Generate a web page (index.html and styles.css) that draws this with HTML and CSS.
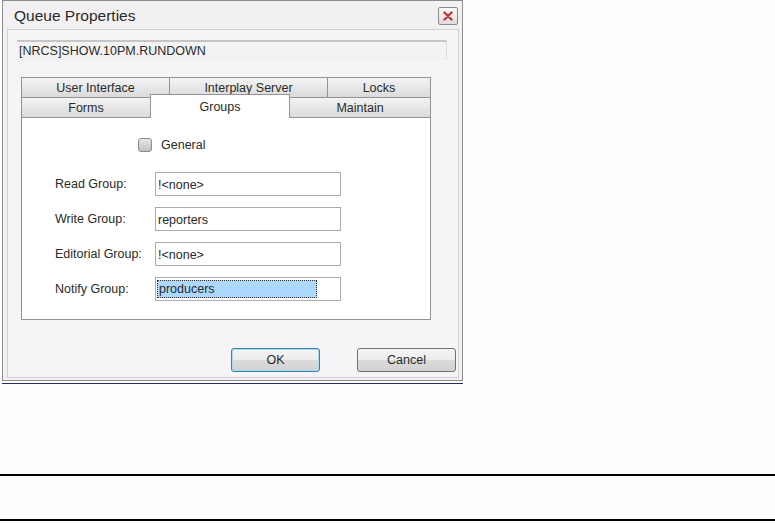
FILE: index.html
```html
<!DOCTYPE html>
<html lang="en">
<head>
    <meta charset="UTF-8">
    <title>Queue Properties</title>
    <link rel="stylesheet" href="styles.css">
</head>
<body>

    <!-- Dialog window -->
    <div class="dialog">
        <div class="titlebar">
            <span class="title">Queue Properties</span>
            <div class="close-btn">
                <svg width="10" height="10" viewBox="0 0 10 10">
                    <path d="M1.5 1.5 L8.5 8.5 M8.5 1.5 L1.5 8.5" stroke="#c4343c" stroke-width="2.4" stroke-linecap="round"/>
                </svg>
            </div>
        </div>

        <div class="client">
            <div class="path-field">[NRCS]SHOW.10PM.RUNDOWN</div>

            <!-- Tab rows -->
            <div class="tabs">
                <div class="tab-row">
                    <div class="tab w1">User Interface</div>
                    <div class="tab w2">Interplay Server</div>
                    <div class="tab w3">Locks</div>
                </div>
                <div class="tab-row">
                    <div class="tab w4">Forms</div>
                    <div class="tab w5 active">Groups</div>
                    <div class="tab w6">Maintain</div>
                </div>
            </div>

            <!-- Groups panel -->
            <div class="panel">
                <div class="check-row">
                    <span class="checkbox"></span>
                    <span>General</span>
                </div>

                <div class="group-form">
                    <label>Read Group:</label>
                    <div class="field">!&lt;none&gt;</div>

                    <label>Write Group:</label>
                    <div class="field">reporters</div>

                    <label>Editorial Group:</label>
                    <div class="field">!&lt;none&gt;</div>

                    <label>Notify Group:</label>
                    <div class="field"><span class="selected">producers</span></div>
                </div>
            </div>

            <!-- Buttons -->
            <div class="buttons">
                <button class="btn default">OK</button>
                <button class="btn">Cancel</button>
            </div>
        </div>
    </div>
    <div class="dialog-edge"></div>

    <!-- Horizontal rules below -->
    <div class="rule first"></div>
    <div class="rule second"></div>

</body>
</html>
```

FILE: styles.css
```css
/* Reset */
* {
    margin: 0;
    padding: 0;
    box-sizing: border-box;
    font-family: "Liberation Sans", Arial, sans-serif;
}

body {
    background-color: #fefefe;
    color: #2a2a2a;
    font-size: 12.5px;
}

/* Dialog frame */
.dialog {
    width: 461px;
    height: 381px;
    margin-left: 2px;
    border: 1px solid #8e8e8e;
    background-color: #f2f0f2;
    display: flex;
    flex-direction: column;
}

.dialog-edge {
    width: 461px;
    height: 1px;
    margin-left: 2px;
    margin-top: 2px;
    background-color: #27286e;
}

/* Title bar */
.titlebar {
    height: 28px;
    display: flex;
    align-items: center;
    justify-content: space-between;
    padding: 2px 4px 0 11px;
}

.title {
    font-size: 15.5px;
    color: #2a2a2a;
}

.close-btn {
    width: 20px;
    height: 18px;
    border: 1px solid #8a8a8a;
    border-radius: 2px;
    background: linear-gradient(#fafafa, #dcdcdc);
    display: flex;
    align-items: center;
    justify-content: center;
}

/* Client area */
.client {
    flex-grow: 1;
    margin: 0 3px 2px 4px;
    border: 1px solid #d2d0d2;
    background-color: #f6f4f6;
    padding: 10px 2px 0 9px;
}

.path-field {
    width: 430px;
    height: 20px;
    border-top: 2px solid #c6c6c6;
    border-right: 1px solid #dedcde;
    border-bottom: 1px solid #eeeeee;
    background-color: #f4f3f4;
    padding: 1px 2px;
    font-size: 12.5px;
    line-height: 16px;
}

/* Tabs */
.tabs {
    margin: 17px 0 0 4px;
}

.tab-row {
    display: flex;
    height: 20px;
}

.tab {
    height: 20px;
    margin-right: -1px;
    border: 1px solid #939393;
    border-bottom: none;
    background: linear-gradient(#f4f4f4, #dadada);
    text-align: center;
    line-height: 20px;
}

.w1 { width: 149px; }
.w2 { width: 159px; }
.w3 { width: 104px; }
.w4 { width: 130px; }
.w5 { width: 140px; }
.w6 { width: 142px; }

.tab.active {
    position: relative;
    z-index: 1;
    height: 24px;
    margin-top: -3px;
    padding-top: 2px;
    background: #ffffff;
    line-height: 20px;
}

/* Panel */
.panel {
    width: 410px;
    height: 203px;
    margin-left: 4px;
    border: 1px solid #939393;
    background-color: #ffffff;
    padding: 20px 0 0 116px;
}

.check-row {
    display: flex;
    align-items: center;
    gap: 9px;
    height: 14px;
}

.checkbox {
    width: 14px;
    height: 14px;
    border: 1px solid #8b8b8b;
    border-radius: 3px;
    background: linear-gradient(#e6e6e6, #c2c2c2);
}

.group-form {
    display: grid;
    grid-template-columns: 100px 186px;
    grid-auto-rows: 24px;
    row-gap: 11px;
    align-items: center;
    margin: 20px 0 0 -83px;
}

.field {
    height: 24px;
    border: 1px solid #a9acb2;
    background-color: #ffffff;
    padding: 0 2px;
    line-height: 24px;
}

.selected {
    display: block;
    width: 160px;
    height: 18px;
    margin: 2px 0 0 -1px;
    border: 1px dotted #333;
    background-color: #acd8fd;
    line-height: 16px;
    padding-left: 1px;
}

/* Buttons */
.buttons {
    display: flex;
    justify-content: flex-end;
    gap: 37px;
    margin-top: 28px;
}

.btn {
    height: 24px;
    width: 99px;
    border: 1px solid #707070;
    border-radius: 3px;
    background: linear-gradient(#f6f6f6 0%, #ebebeb 50%, #dbdbdb 51%, #d2d2d2 100%);
    font-size: 12.5px;
    color: #2a2a2a;
}

.btn.default {
    width: 89px;
    border-color: #3c7fb1;
    box-shadow: inset 0 0 0 1px #a7dbf2;
}

/* Rules */
.rule {
    height: 2px;
    background-color: #000;
}

.rule.first {
    margin-top: 90px;
}

.rule.second {
    margin-top: 43px;
}
```
